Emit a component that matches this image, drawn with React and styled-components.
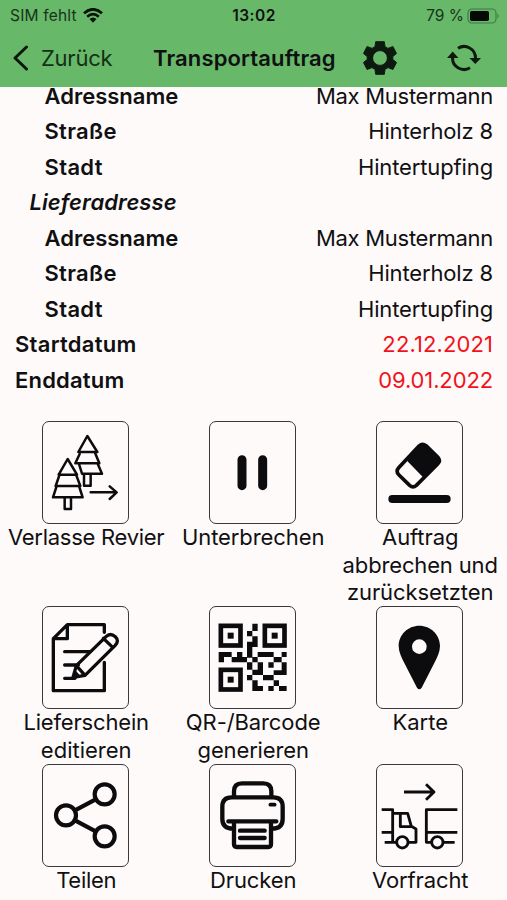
import React from "react";
import styled, { createGlobalStyle } from "styled-components";

const Global = createGlobalStyle`
  * { box-sizing: border-box; }
  body { margin: 0; background: #fefaf9; }
`;

const Screen = styled.div`
  width: 507px;
  height: 900px;
  overflow: hidden;
  display: flex;
  flex-direction: column;
  background: #fefaf9;
  color: #101012;
  font-family: Inter, "Liberation Sans", sans-serif;
`;

const Header = styled.header`
  flex: none;
  height: 87px;
  background: #67b868;
`;

const StatusBar = styled.div`
  display: grid;
  grid-template-columns: 1fr auto 1fr;
  align-items: center;
  height: 30px;
  padding: 1px 8px 0 10px;
  font-size: 15.5px;
  line-height: 29px;
`;

const Carrier = styled.div`
  display: flex;
  align-items: center;
  gap: 6px;
  color: #17331a;
  letter-spacing: 0.2px;
`;

const Battery = styled.div`
  display: flex;
  align-items: center;
  justify-content: flex-end;
  gap: 3px;
  margin-right: -1px;
  color: #17331a;
`;

const Clock = styled.div`
  margin-left: -1px;
  font-weight: 600;
  letter-spacing: 0.5px;
`;

const NavBar = styled.nav`
  display: flex;
  align-items: center;
  height: 55px;
  padding-left: 12px;
`;

const BackButton = styled.div`
  display: flex;
  align-items: center;
  width: 141px;
  gap: 11px;
  font-size: 22px;
  letter-spacing: -0.25px;
  color: #143016;
`;

const Title = styled.div`
  width: 210px;
  font-size: 22px;
  font-weight: 600;
  letter-spacing: 0.13px;
  white-space: nowrap;
`;

const NavIcon = styled.div`
  display: flex;
  width: ${(p) => p.$width}px;
`;

const Viewport = styled.main`
  flex: 1;
  overflow: hidden;
  display: flex;
  flex-direction: column;
`;

const Details = styled.dl`
  flex: none;
  margin: -8.4px 0 0;
`;

const Row = styled.div`
  display: flex;
  justify-content: space-between;
  height: 35.5px;
  line-height: 35.5px;
  padding: 0 14px 0 ${(p) => p.$indent}px;
  font-size: 22px;
`;

const Term = styled.dt`
  font-weight: 600;
  font-style: ${(p) => (p.$italic ? "italic" : "normal")};
  letter-spacing: ${(p) => p.$spacing}px;
`;

const Value = styled.dd`
  margin: 0;
  color: ${(p) => (p.$alert ? "#f0131d" : "inherit")};
  letter-spacing: ${(p) => p.$spacing}px;
`;

const Actions = styled.div`
  display: grid;
  grid-template-columns: repeat(3, 167px);
  margin: 22.4px 0 0 2.3px;
`;

const Action = styled.div`
  display: flex;
  flex-direction: column;
  align-items: center;
`;

const IconBox = styled.div`
  width: 87px;
  height: 103px;
  border: 1px solid #39393b;
  border-radius: 7px;

  svg { display: block; width: 85px; height: 101px; }
`;

const Label = styled.div`
  padding: 0.8px 0 0 0.8px;
  margin-bottom: -0.5px;
  font-size: 22px;
  line-height: 27.3px;
  text-align: center;
  white-space: nowrap;
`;

const Line = styled.div`
  letter-spacing: ${(p) => p.$spacing || 0}px;
`;

const Icon = ({ x, y = 36, width = 7, children }) => (
  <svg viewBox={`${x} ${y} 255 303`} fill="none" stroke="#0c0c0e" strokeWidth={width} strokeLinecap="round" strokeLinejoin="round">
    {children}
  </svg>
);

const Trees = () => (
  <Icon x={41} width={7.5}>
    <path d="M174 78 147 126H204ZM151 132 138 160H210L197 128M149 162 158 191H218L205 161M164 192V227H184V192" />
    <path fill="#fefaf9" d="M115 147 88 194H143ZM90 196 79 228H153L141 196M82 228 71 262H160L149 228M106 263V297H125V263" />
    <path d="M184 247H261M241 229 262 247 241 267" />
  </Icon>
);

const Pause = () => (
  <Icon x={31} width={27}>
    <path d="M127 149V227M189 149V227" />
  </Icon>
);

const Eraser = () => (
  <Icon x={37} width={24}>
    <path d="M83 267H246" />
    <path strokeWidth="11" d="M163 108Q173 99 184 107L219 141Q229 152 219 162L155 226Q145 235 135 226L103 195Q92 184 102 173Z" />
    <path fill="#0c0c0e" strokeWidth="4" d="M130 152 166 106Q174 101 182 106L221 144Q228 153 221 162L178 202Z" />
  </Icon>
);

const Document = () => (
  <Icon x={41} width={10}>
    <path d="M225 112V89H114L72 131V287H225V202M114 89V131H72" />
    <path d="M106 170H182M106 210H147M106 250H137" />
    <path d="M131 247 141 212 230 125Q243 112 258 125 271 137 257 152L167 241ZM222 130 251 158M141 212 167 241" />
    <path fill="#0c0c0e" stroke="none" d="M131 248 138 226 153 242Z" />
  </Icon>
);

const Pin = () => (
  <Icon x={37}>
    <path fill="#0c0c0e" fillRule="evenodd" stroke="none" d="M164 92C130 92 102 119 102 153 102 171 111 188 119 204L157 278Q164 287 171 278L209 204C217 188 226 171 226 153 226 119 198 92 164 92ZM164 133A22 22 0 1 1 164 177 22 22 0 1 1 164 133Z" />
  </Icon>
);

const Share = () => (
  <Icon x={41} y={28} width={12.5}>
    <circle cx="110" cy="179" r="30" />
    <circle cx="226" cy="116" r="30" />
    <circle cx="226" cy="242" r="30" />
    <path d="M137 164 199 131M137 194 199 227" />
  </Icon>
);

const Printer = () => (
  <Icon x={31} y={28} width={13}>
    <path d="M103 123V107Q103 83 127 83H191Q215 83 215 107V123" />
    <path d="M101 219Q68 219 68 190V153Q68 125 96 125H221Q249 125 249 153V190Q249 219 217 219" />
    <path d="M86 197H230M103 200V266Q103 274 111 274H206Q214 274 214 266V200M121 225H195M121 247H195" />
    <path strokeWidth="11" d="M212 147H225" />
  </Icon>
);

const Truck = () => (
  <Icon x={37} y={28} width={8.5}>
    <path strokeLinecap="butt" d="M51 162H84V260M51 230H84M60 260H96M130 260H154V220L140 212 129 173H84M107 173V213H141" />
    <circle cx="113" cy="260" r="17" />
    <path strokeLinecap="butt" d="M278 162H185V260H201M185 230H278M236 260H270" />
    <circle cx="218" cy="260" r="17" />
    <path strokeLinecap="butt" d="M118 109H207M184 86 208 109 184 132" />
  </Icon>
);

const Finder = ({ x, y }) => (
  <>
    <rect x={x + 6.5} y={y + 6.5} width="59" height="59" strokeWidth="14" strokeLinejoin="miter" />
    <rect x={x + 27} y={y + 27} width="18" height="18" fill="#0c0c0e" stroke="none" />
  </>
);

const QrCode = () => (
  <Icon x={31}>
    <Finder x={57} y={86} />
    <Finder x={189} y={86} />
    <Finder x={57} y={218} />
    <path fill="#0c0c0e" stroke="none" d="M158 86H174V108H158ZM142 108H158V124H142ZM158 124H174V156H158V188H142V140H158ZM57 171H96V186H73V202H57ZM112 171H128V186H142V202H96V186H112ZM174 171H222V186H174ZM246 171H261V186H246ZM158 186H174V202H158ZM222 186H246V202H222ZM142 202H158V224H142ZM174 202H190V240H158V224H174ZM206 202H222V218H206ZM246 202H261V240H222V226H246ZM142 240H158V256H142ZM190 240H222V256H190ZM158 256H174V273H190V288H158ZM222 256H238V273H222ZM206 273H222V288H206ZM238 273H261V288H238Z" />
  </Icon>
);

const address = [
  ["Adressname", "Max Mustermann", 44.5, 0, -0.28],
  ["Straße", "Hinterholz 8", 44.5, 0.3, -0.15],
  ["Stadt", "Hintertupfing", 44.5, 0.35, -0.13],
];

const details = [
  ...address,
  ["Lieferadresse", "", 29.5, 0.08, 0],
  ...address,
  ["Startdatum", "22.12.2021", 15, 0.27, 0.1],
  ["Enddatum", "09.01.2022", 15, 0.2, -0.12],
];

const actions = [
  [Trees, [["Verlasse Revier", -0.28]]],
  [Pause, [["Unterbrechen", -0.08]]],
  [Eraser, [["Auftrag", -0.1], ["abbrechen und", -0.15], ["zurücksetzten", -0.1]]],
  [Document, [["Lieferschein", -0.17], ["editieren"]]],
  [QrCode, [["QR-/Barcode", -0.1], ["generieren", -0.15]]],
  [Pin, [["Karte"]]],
  [Share, [["Teilen", -0.3]]],
  [Printer, [["Drucken", -0.1]]],
  [Truck, [["Vorfracht", -0.1]]],
];

const GearIcon = () => (
  <svg width="34" height="34" viewBox="0 0 34 34" fill="#0d1a10">
    <path stroke="#0d1a10" strokeWidth="1" strokeLinejoin="round" fillRule="evenodd" d="M12.7 .7H21.3L22 5.7 25 7.4 29.9 5.5 33.5 12.5 29.8 15.5V18.5L33.5 21.5 29.9 28.5 25 26.6 22 28.3 21.3 33.3H12.7L12 28.3 9 26.6 4.1 28.5.5 21.5 4.2 18.5V15.5L.5 12.5 4.1 5.5 9 7.4 12 5.7ZM17 9.6A7.4 7.4 0 1 0 17 24.4 7.4 7.4 0 1 0 17 9.6Z" />
  </svg>
);

const RefreshIcon = () => (
  <svg width="34" height="28" viewBox="0 0 34 28" fill="none" stroke="#0d1a10" strokeWidth="3">
    <path d="M11 4.2A11.5 11.5 0 0 1 28.5 14M23 23.8A11.5 11.5 0 0 1 5.5 14" />
    <path fill="#0d1a10" stroke="none" d="M22.5 14H34L28.3 20ZM0 14H11.5L5.7 7.5Z" />
  </svg>
);

export default function App() {
  return (
    <Screen>
      <Global />
      <Header>
        <StatusBar>
          <Carrier>
            <span>SIM fehlt</span>
            <svg width="20" height="15" viewBox="0 0 20 15" fill="none" stroke="#071108" strokeWidth="2.7">
              <path d="M1 5.2Q10-2.6 19 5.2M4.2 8.7Q10 3.7 15.8 8.7" />
              <path fill="#071108" stroke="none" d="M6.5 11Q10 8 13.5 11L10 14.7Z" />
            </svg>
          </Carrier>
          <Clock>13:02</Clock>
          <Battery>
            <span>79 %</span>
            <svg width="33" height="16" viewBox="0 0 33 16">
              <rect x="1" y="1" width="28" height="14" rx="4" fill="none" stroke="#42794a" strokeWidth="1.2" />
              <rect x="3" y="3" width="19" height="10" rx="1.8" fill="#050a05" />
              <path d="M30.5 5.5Q33 8 30.5 10.5Z" fill="#42794a" />
            </svg>
          </Battery>
        </StatusBar>
        <NavBar>
          <BackButton>
            <svg width="18" height="26" viewBox="0 0 18 26" fill="none" stroke="#0b170c" strokeWidth="3" strokeLinecap="round" strokeLinejoin="round">
              <path d="M14.5 2 3 13 14.5 24" />
            </svg>
            Zurück
          </BackButton>
          <Title>Transportauftrag</Title>
          <NavIcon $width={84}><GearIcon /></NavIcon>
          <NavIcon $width={34}><RefreshIcon /></NavIcon>
        </NavBar>
      </Header>
      <Viewport>
        <Details>
          {details.map(([term, value, indent, termSpacing, valueSpacing], i) => (
            <Row key={i} $indent={indent}>
              <Term $italic={!value} $spacing={termSpacing}>{term}</Term>
              <Value $alert={indent === 15} $spacing={valueSpacing}>{value}</Value>
            </Row>
          ))}
        </Details>
        <Actions>
          {actions.map(([Glyph, lines], i) => (
            <Action key={i}>
              <IconBox><Glyph /></IconBox>
              <Label>
                {lines.map(([text, spacing]) => <Line key={text} $spacing={spacing}>{text}</Line>)}
              </Label>
            </Action>
          ))}
        </Actions>
      </Viewport>
    </Screen>
  );
}
